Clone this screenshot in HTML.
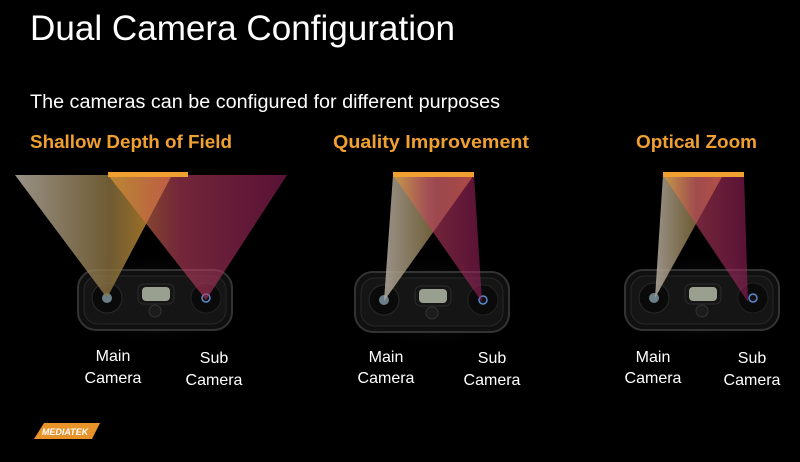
<!DOCTYPE html>
<html><head><style>
body{margin:0;width:800px;height:457px;background:#000;overflow:hidden;font-family:"Liberation Sans",sans-serif}
</style></head><body>
<svg width="800" height="457" viewBox="0 0 800 457" xmlns="http://www.w3.org/2000/svg">
<defs>
<linearGradient id="g1" x1="0" y1="0" x2="1" y2="0"><stop offset="0" stop-color="#b5aca0" stop-opacity=".85"/><stop offset=".6" stop-color="#8a7240" stop-opacity=".8"/><stop offset="1" stop-color="#d08a20" stop-opacity=".9"/></linearGradient>
<linearGradient id="g2" x1="0" y1="0" x2="1" y2="0"><stop offset="0" stop-color="#e0a030" stop-opacity=".85"/><stop offset=".4" stop-color="#c04060" stop-opacity=".75"/><stop offset="1" stop-color="#a02060" stop-opacity=".7"/></linearGradient>
<radialGradient id="glow" cx=".5" cy=".5" r=".5"><stop offset="0" stop-color="#444" stop-opacity=".6"/><stop offset="1" stop-color="#000" stop-opacity="0"/></radialGradient>
<g id="mod">
<ellipse cx="77" cy="30" rx="95" ry="50" fill="url(#glow)"/>
<rect x="0" y="0" width="154" height="60" rx="18" fill="#101010" stroke="#333" stroke-width="2"/>
<rect x="6" y="6" width="142" height="48" rx="14" fill="#151515" stroke="#282828"/>
<circle cx="29" cy="28" r="15" fill="#0a0a0a" stroke="#2a2a2a"/>
<circle cx="29" cy="28" r="5" fill="#6a7f88"/>
<rect x="60" y="14" width="36" height="20" rx="6" fill="#151515" stroke="#2a2a2a"/>
<rect x="64" y="17" width="28" height="14" rx="4" fill="#9aa090"/>
<circle cx="77" cy="41" r="6" fill="#1c1c1c" stroke="#333"/>
<circle cx="128" cy="28" r="15" fill="#0a0a0a" stroke="#222"/>
<circle cx="128" cy="28" r="4" fill="#111" stroke="#5a8ad0" stroke-width="1.5"/>
</g>
</defs>
<text x="30" y="40" fill="#fff" font-size="35" textLength="425" lengthAdjust="spacingAndGlyphs">Dual Camera Configuration</text>
<text x="30" y="108" fill="#fff" font-size="19" textLength="470" lengthAdjust="spacingAndGlyphs">The cameras can be configured for different purposes</text>
<g fill="#f0a030" font-weight="bold" font-size="18">
<text x="30" y="148" textLength="202" lengthAdjust="spacingAndGlyphs">Shallow Depth of Field</text>
<text x="333" y="148" textLength="196" lengthAdjust="spacingAndGlyphs">Quality Improvement</text>
<text x="636" y="148" textLength="121" lengthAdjust="spacingAndGlyphs">Optical Zoom</text>
</g>
<use href="#mod" x="78" y="270"/>
<use href="#mod" x="355" y="272"/>
<use href="#mod" x="625" y="270"/>
<polygon points="15,175 172,175 107,298" fill="url(#g1)"/>
<polygon points="108,175 287,175 206,300" fill="url(#g2)" opacity=".8"/>
<rect x="108" y="172" width="80" height="5" fill="#f0a030"/>
<polygon points="393,175 474,175 384,301" fill="url(#g1)"/>
<polygon points="393,175 474,175 482,302" fill="url(#g2)" opacity=".8"/>
<rect x="393" y="172" width="81" height="5" fill="#f0a030"/>
<polygon points="663,175 723,175 655,298" fill="url(#g1)"/>
<polygon points="663,175 744,175 748,302" fill="url(#g2)" opacity=".8"/>
<rect x="663" y="172" width="81" height="5" fill="#f0a030"/>
<g fill="#fff" font-size="16" text-anchor="middle">
<text x="113" y="361">Main</text><text x="113" y="383">Camera</text>
<text x="214" y="363">Sub</text><text x="214" y="385">Camera</text>
<text x="386" y="362">Main</text><text x="386" y="383">Camera</text>
<text x="492" y="363">Sub</text><text x="492" y="385">Camera</text>
<text x="653" y="362">Main</text><text x="653" y="383">Camera</text>
<text x="752" y="363">Sub</text><text x="752" y="385">Camera</text>
</g>
<polygon points="44,423 100,423 92,439 34,439" fill="#e8922a"/>
<text x="65" y="435" fill="#fff" font-size="9" font-weight="bold" font-style="italic" text-anchor="middle">MEDIATEK</text>
</svg>
</body></html>
